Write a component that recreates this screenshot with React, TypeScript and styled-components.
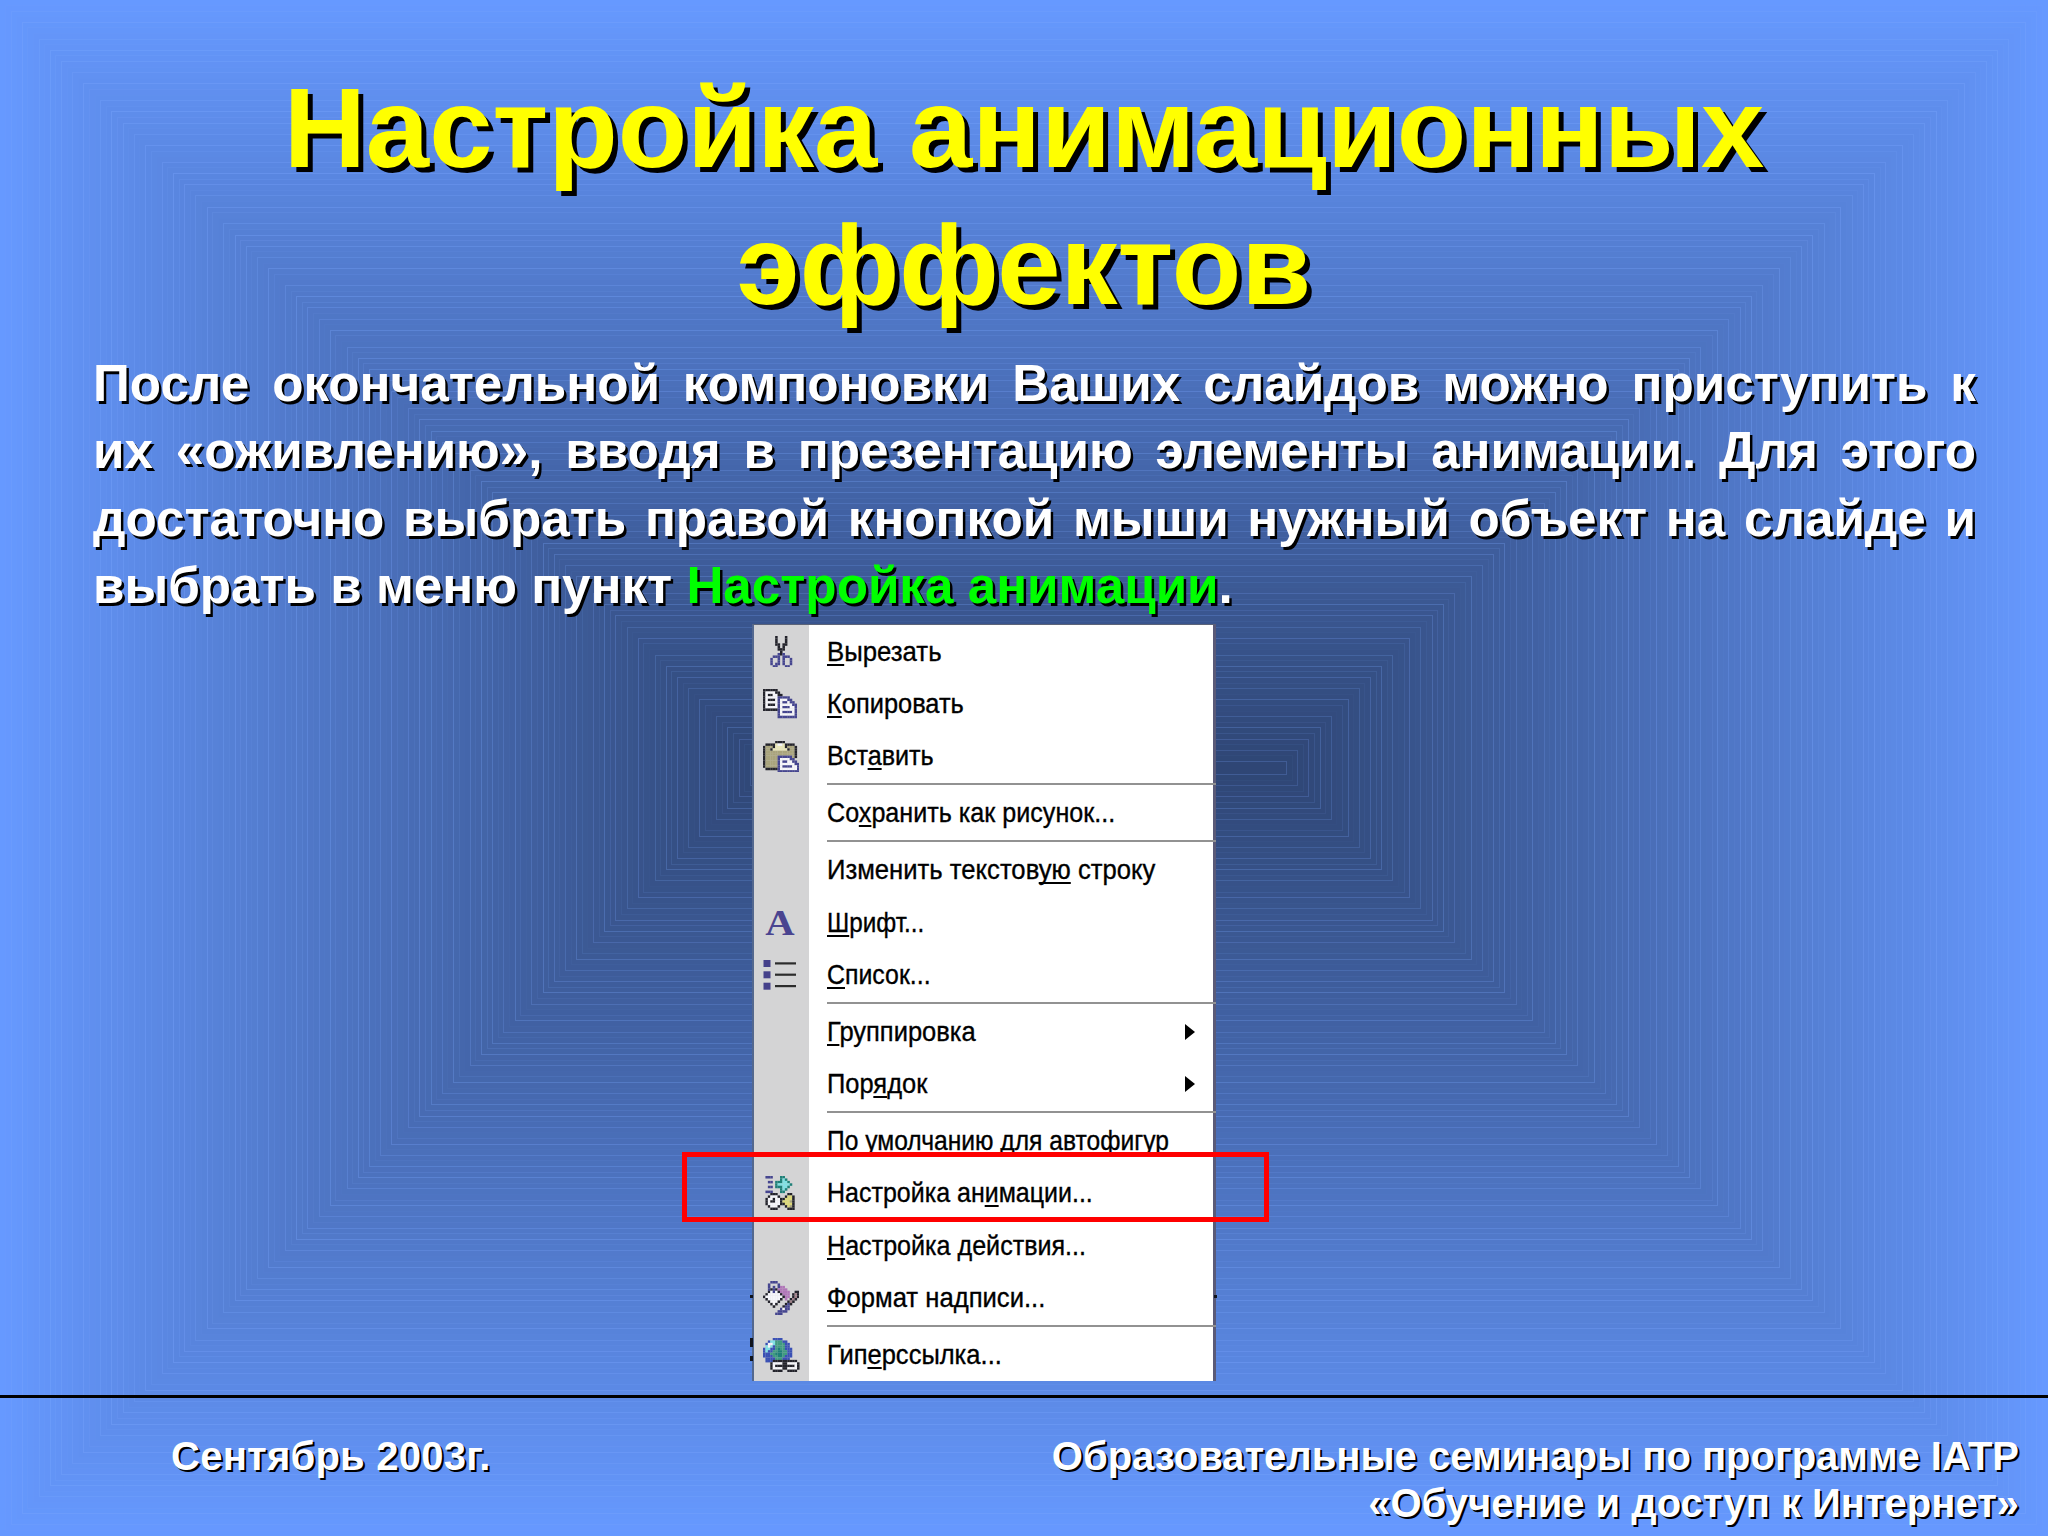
import React, { useLayoutEffect, useRef, useState } from "react";
import styled, { createGlobalStyle } from "styled-components";

const GlobalStyle = createGlobalStyle`
  html, body { margin: 0; padding: 0; }
  body { width: 2048px; height: 1536px; overflow: hidden; background: #6699ff; }
`;

const Slide = styled.main`
  position: relative;
  isolation: isolate;
  display: flex;
  flex-direction: column;
  box-sizing: border-box;
  width: 2048px;
  height: 1536px;
  padding-top: 59px;
  overflow: hidden;
  font-family: "Liberation Sans", Arial, sans-serif;
  color: #fff;
`;

const Backdrop = styled.svg`
  position: absolute;
  inset: 0;
  z-index: -1;
`;

const Title = styled.h1`
  margin: 0;
  font-size: 113.8px;
  line-height: 137px;
  font-weight: 700;
  text-align: center;
  color: #ffff00;
  text-shadow: 5px 5px 0 #000;
`;

const Body = styled.p`
  margin: 16.5px 72px 0 93px;
  font-size: 51.2px;
  line-height: 67.5px;
  font-weight: 700;
  text-shadow: 2.5px 2.5px 0 #000;
`;

const Line = styled.span<{ $last?: boolean }>`
  display: block;
  white-space: nowrap;
  text-align: justify;
  text-align-last: ${(p) => (p.$last ? "left" : "justify")};
`;

const Accent = styled.span`
  color: #00ff00;
`;

const Menu = styled.div`
  position: relative;
  box-sizing: border-box;
  width: 464px;
  height: 757px;
  margin: 4.5px 0 0 752px;
  border-style: solid;
  border-width: 1.5px 3px 0 2px;
  border-color: #5c6478 #5a5a78 #5c6478 #53688f;
  background: linear-gradient(to right, #d4d4d5 55px, #fff 55px);
  color: #000;
`;

const Row = styled.div`
  display: flex;
  align-items: center;
  height: 52.35px;
`;

const Gutter = styled.div`
  display: flex;
  flex: none;
  align-items: center;
  box-sizing: border-box;
  width: 55px;
  height: 100%;
  padding: 1px 0 0 9px;
`;

const Separator = styled.div`
  height: 2px;
  margin: 1px -3px 1.6px 73px;
  background: #929292;
`;

const LabelBox = styled.span`
  display: block;
  margin-left: 18px;
  padding-top: 1px;
  font-size: 28px;
  line-height: 32px;
  white-space: pre;
  transform-origin: 0 50%;
  -webkit-text-stroke: 0.35px #000;
`;

const Key = styled.span`
  text-decoration: underline;
  text-decoration-thickness: 2px;
  text-underline-offset: 3px;
  text-decoration-skip-ink: none;
`;

const Submenu = styled.i`
  margin: 1px 18px 0 auto;
  border-style: solid;
  border-width: 8px 0 8px 10px;
  border-color: transparent transparent transparent #000;
`;

const LetterIcon = styled.b`
  width: 34px;
  font: 700 36px/40px "Liberation Serif", serif;
  text-align: center;
  color: #4a4490;
  transform: scaleX(1.13);
`;

const Highlight = styled.div`
  position: absolute;
  left: -72px;
  top: 526.5px;
  box-sizing: border-box;
  width: 587px;
  height: 70px;
  border: 5.5px solid #ff0000;
`;

const Speck = styled.i<{ $x: number; $y: number; $h: number }>`
  position: absolute;
  left: ${(p) => p.$x}px;
  top: ${(p) => p.$y}px;
  width: 3px;
  height: ${(p) => p.$h}px;
  background: #10131c;
`;

const Footer = styled.footer`
  display: flex;
  justify-content: space-between;
  box-sizing: border-box;
  margin-top: auto;
  height: 141px;
  padding: 34.5px 29px 0 171px;
  border-top: 3px solid #000;
  font-size: 40px;
  line-height: 47.7px;
  font-weight: 700;
  text-shadow: 2px 2px 0 #000;
`;

const Issued = styled.div`
  letter-spacing: 0.25px;
`;

const Organizer = styled.div`
  text-align: right;
`;

/* Concentric frames, stepping from the bright edge to the dark middle. */
const STEP = 5.6;
const COUNT = 136;
const mix = (a: number, b: number, t: number) => Math.round(a + (b - a) * t);
const GLOW = [0.1, 0.28, 0.06, 0.36, 0.16, 0.04, 0.3, 0.12, 0.38, 0.2, 0.34];

function Rings() {
  return (
    <Backdrop width="2048" height="1536" viewBox="0 0 2048 1536">
      <rect width="2048" height="1536" fill="#6699ff" />
      {Array.from({ length: COUNT }, (_, i) => {
        const t = (i + 1) / COUNT;
        const x = Math.floor((i + 1) * STEP - 0.1);
        return (
          <g key={i}>
            <rect
              x={x}
              y={x}
              width={2048 - 2 * x}
              height={1536 - 2 * x}
              fill={`rgb(${mix(102, 47, t)},${mix(153, 70, t)},${mix(255, 117, t)})`}
            />
            <rect
              x={x + 0.5}
              y={x + 0.5}
              width={2047 - 2 * x}
              height={1535 - 2 * x}
              fill="none"
              stroke="#7aa6ff"
              strokeOpacity={GLOW[i % GLOW.length] * (1 - t * 0.35)}
            />
          </g>
        );
      })}
    </Backdrop>
  );
}

const INK: Record<string, string> = {
  K: "#23232b", B: "#45458f", W: "#f6f6fa", Y: "#a9a47c", y: "#e9e6b8",
  L: "#dcd878", C: "#7fe0e4", T: "#1f8078", P: "#b077b8", G: "#3f9a80",
  R: "#a08088", N: "#3a50b4",
};

const PX = 2.43;

const ICONS: Record<string, string[]> = {
  cut: [
    ".....K...K....", ".....K...K....", ".....K...K....", ".....KK.KK....",
    "......K.K.....", "......KKK.....", ".......K......", "......BKB.....",
    "....BBB.BBB...", "...B..B.B..B..", "...B..B.B..B..", "...B.BB.B..B..",
    "....BB...BB...",
  ],
  copy: [
    "KKKKKK........", "KWWWWKK.......", "KWKKWWKK......", "KWWWWWBBBBB...",
    "KWKKKWBWWWBB..", "KWWWWWBWBBWBB.", "KWKKKWBWWWWWBB", "KWWWWWBWBBBWWB",
    "KKKKKKBWWWWWWB", "......BWBBBBWB", "......BWWWWWWB", "......BBBBBBBB",
  ],
  paste: [
    ".....KKKK......", ".KKKKyWWyKKKK..", "KYYYKyyyyKYYYK.", "KYYKyyyyyyKYYK.",
    "KYYYYYYYYYYYYK.", "KYYYYYYYYYYYYK.", "KYYYYYBBBBBBYK.", "KYYYYYBWWWWBB..",
    "KYYYYYBWBBWWBB.", "KYYYYYBWWWWWWBB", "KYYYYYBWBBBBWWB", ".KKKKKBWWWWWWWB",
    "......BBBBBBBBB",
  ],
  animation: [
    ".BBB...TT.....", ".......TCT....", "..BB.TTTCCT...", ".....TCCCCCT..",
    "..BB.TTTCCT...", ".......TCT....", ".BBB...TT.....", "...KKK....KK..",
    "..KWWWK..KLLK.", ".KWWKWWKKLLLK.", ".KWKKWWKLLLYK.", ".KWWWWWKKLLLK.",
    "..KWWWK..KLYK.", "...KKK....KKK.",
  ],
  format: [
    "...BBB.........", "..B...B........", "..B.B.BPP......", "..BKBKPPPP.....",
    "..KWBWKPPPP..KK", ".KWWWWWKPPP.KRK", "KWWWWWWWKPP.KRK", ".KWWWWWK.P.KRK.",
    "..KWWWK...KRK..", "...KWK...KBK...", "....K...KBB....", ".......BWBB....",
    "......BBBB.....", ".....BBB.......",
  ],
  link: [
    "....NNNN........", "..NCCGGGNN......", ".NWWCGGGGNN.....", ".CWCNGGGGNN.....",
    "NCCNNGTGGNNN....", "NCNNGGTTGGNN....", "NNNGGTTTGGNN....", "NNNNGGTTGNNN....",
    ".NNNNGGGNNN.....", ".NNNKKKKKKKKKK..", "...KWWWWKKWWWWK.", "...KWKKKKKKKKWK.",
    "...KWWWWKKWWWWK.", "....KKKK..KKKK..",
  ],
};

function PixelIcon({ name }: { name: string }) {
  const grid = ICONS[name];
  const w = grid[0].length;
  const h = grid.length;
  return (
    <svg width={w * PX} height={h * PX} viewBox={`0 0 ${w} ${h}`}>
      {grid.flatMap((line, y) =>
        line.split("").map((c, x) =>
          INK[c] ? <rect key={`${x}-${y}`} x={x} y={y} width="1.04" height="1.04" fill={INK[c]} /> : null
        )
      )}
    </svg>
  );
}

function ListIcon() {
  return (
    <svg width="34" height="32" viewBox="0 0 34 32">
      {[1, 12.3, 23.7].map((y) => (
        <g key={y}>
          <rect x="0.5" y={y} width="7" height="7" fill="#45408a" />
          <rect x="12" y={y + 2.3} width="21" height="2.2" fill="#2c2c2c" />
        </g>
      ))}
    </svg>
  );
}

/* Menu caption squeezed to the advance width of the narrow system font. */
function Label({ text, width }: { text: string; width: number }) {
  const ref = useRef<HTMLSpanElement>(null);
  const [scale, setScale] = useState(1);
  useLayoutEffect(() => {
    if (ref.current) setScale(width / ref.current.offsetWidth);
  }, [text, width]);
  const [before, key, after] = text.split("_");
  return (
    <LabelBox ref={ref} style={{ transform: `scaleX(${scale})` }}>
      {before}
      <Key>{key}</Key>
      {after}
    </LabelBox>
  );
}

type Item = { text: string; width: number; icon?: string; sub?: boolean; sep?: boolean };

const ITEMS: Item[] = [
  { text: "_В_ырезать", width: 115, icon: "cut" },
  { text: "_К_опировать", width: 137, icon: "copy" },
  { text: "Вст_а_вить", width: 107, icon: "paste", sep: true },
  { text: "Со_х_ранить как рисунок...", width: 288, sep: true },
  { text: "Изменить текстов_ую_ строку", width: 328 },
  { text: "_Ш_рифт...", width: 97, icon: "letter" },
  { text: "_С_писок...", width: 104, icon: "list", sep: true },
  { text: "_Г_руппировка", width: 148.5, sub: true },
  { text: "Пор_я_док", width: 100, sub: true, sep: true },
  { text: "По ум_о_лчанию для автофигур", width: 342 },
  { text: "Настройка ан_и_мации...", width: 266, icon: "animation" },
  { text: "_Н_астройка действия...", width: 259 },
  { text: "_Ф_ормат надписи...", width: 218, icon: "format", sep: true },
  { text: "Гип_е_рссылка...", width: 175, icon: "link" },
];

function ItemIcon({ name }: { name?: string }) {
  if (!name) return null;
  if (name === "letter") return <LetterIcon>A</LetterIcon>;
  if (name === "list") return <ListIcon />;
  return <PixelIcon name={name} />;
}

export default function App() {
  return (
    <>
      <GlobalStyle />
      <Slide>
        <Rings />
        <Title>
          Настройка анимационных
          <br />
          эффектов
        </Title>
        <Body>
          <Line>После окончательной компоновки Ваших слайдов можно приступить к</Line>
          <Line>их «оживлению», вводя в презентацию элементы анимации. Для этого</Line>
          <Line>достаточно выбрать правой кнопкой мыши нужный объект на слайде и</Line>
          <Line $last>
            выбрать в меню пункт <Accent>Настройка анимации</Accent>.
          </Line>
        </Body>
        <Menu>
          {ITEMS.map((item) => (
            <React.Fragment key={item.text}>
              <Row>
                <Gutter>
                  <ItemIcon name={item.icon} />
                </Gutter>
                <Label text={item.text} width={item.width} />
                {item.sub && <Submenu />}
              </Row>
              {item.sep && <Separator />}
            </React.Fragment>
          ))}
          <Speck $x={-4} $y={670} $h={3} />
          <Speck $x={-4} $y={713} $h={9} />
          <Speck $x={-4} $y={731} $h={5} />
          <Speck $x={460} $y={670} $h={3} />
          <Highlight />
        </Menu>
        <Footer>
          <Issued>Сентябрь 2003г.</Issued>
          <Organizer>
            Образовательные семинары по программе IATP
            <br />
            «Обучение и доступ к Интернет»
          </Organizer>
        </Footer>
      </Slide>
    </>
  );
}
